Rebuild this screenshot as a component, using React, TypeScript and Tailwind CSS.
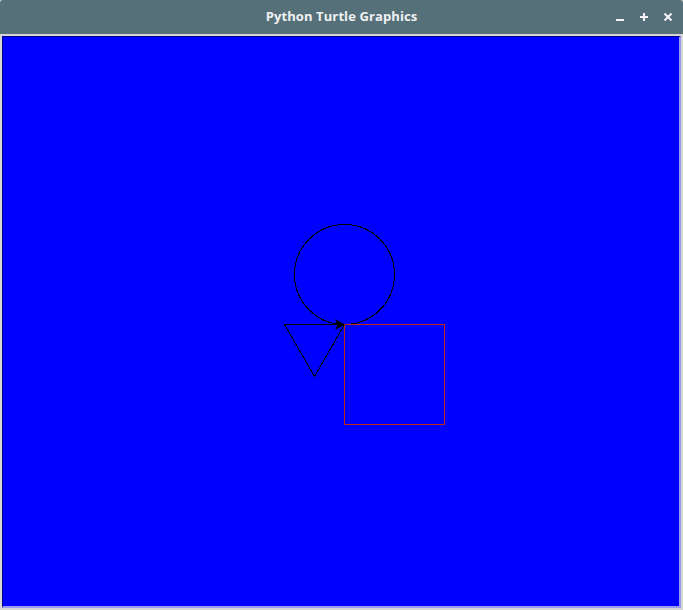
export default function App() {
  return (
    <div className="w-[683px] h-[610px] flex flex-col bg-[#d6d6d6] overflow-hidden">
      <header className="h-[34px] shrink-0 relative flex items-center justify-center bg-[#56707a] rounded-t-[3px]">
        <span className="text-[13px] font-bold text-[#eef1f2] font-['Open_Sans',sans-serif] tracking-[0.1px]">
          Python Turtle Graphics
        </span>
        <div className="absolute right-[10px] top-0 h-full flex items-center gap-[14px] text-[#f2f4f5]">
          <svg width="10" height="10" viewBox="0 0 10 10">
            <rect x="1" y="7" width="8" height="2" fill="currentColor" />
          </svg>
          <svg width="10" height="10" viewBox="0 0 10 10">
            <rect x="4" y="1" width="2" height="8" fill="currentColor" />
            <rect x="1" y="4" width="8" height="2" fill="currentColor" />
          </svg>
          <svg width="10" height="10" viewBox="0 0 10 10">
            <path d="M1.5 1.5 L8.5 8.5 M8.5 1.5 L1.5 8.5" stroke="currentColor" strokeWidth="2" />
          </svg>
        </div>
      </header>
      <main className="flex-1 flex pt-[2px] pl-[2px] pr-[2px] pb-[2px]">
        <div className="flex-1 flex border-t border-l border-t-[#00008a] border-l-[#00008a] border-r-2 border-b-2 border-r-[#9a9af2] border-b-[#9a9af2] bg-[#0000ff]">
          <svg className="flex-1" width="676" height="569" viewBox="0 0 676 569">
            <circle cx="341.5" cy="237.5" r="50" fill="none" stroke="#000" strokeWidth="1" shapeRendering="crispEdges" />
            <polygon points="281.5,287.5 341.5,287.5 311.5,339.5" fill="none" stroke="#000" strokeWidth="1" shapeRendering="crispEdges" />
            <rect x="341.5" y="287.5" width="100" height="100" fill="none" stroke="#c02a10" strokeWidth="1" />
            <polygon points="342,287.5 332,293 334.5,287.5 332,282" fill="#000" />
          </svg>
        </div>
      </main>
    </div>
  );
}
